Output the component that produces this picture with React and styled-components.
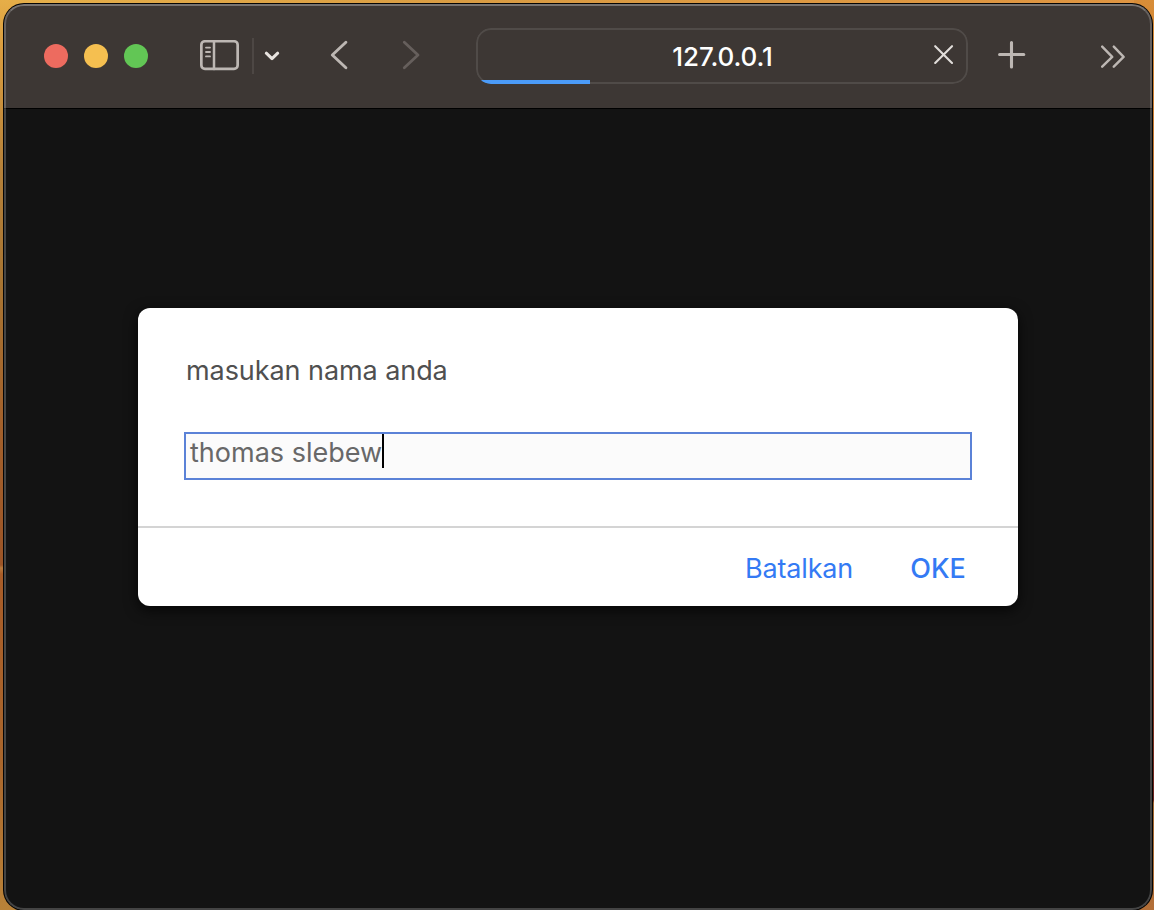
import React from "react";
import styled, { createGlobalStyle } from "styled-components";

const GlobalStyle = createGlobalStyle`
  *, *::before, *::after { box-sizing: border-box; }
  html, body { margin: 0; height: 100%; overflow: hidden; }
  body { font-family: Inter, "Liberation Sans", sans-serif; }
`;

const Desktop = styled.div`
  width: 1154px;
  height: 910px;
  padding: 4px 2px 0 4px;
  overflow: hidden;
  background:
    linear-gradient(to bottom, #e6ae48 0, #d99c3f 50px, #b5813a 170px, #a87532 280px, #a3602b 430px, #9c5527 565px, #b87a3c 568px, #a85c28 574px, #a9662c 760px, #b98238 910px) 0 0 / 20px 100% no-repeat,
    linear-gradient(to bottom, #d88d38 0, #c97b30 120px, #b0652b 350px, #8a3c20 680px, #6a201c 800px, #a0652c 803px, #b36f38 910px) 100% 0 / 20px 100% no-repeat,
    linear-gradient(to right, #e6b04a, #d99c43 40%, #df9441);
`;

const Window = styled.main`
  position: relative;
  display: flex;
  flex-direction: column;
  width: 1148px;
  height: 906px;
  overflow: hidden;
  border-radius: 20px;
  background: #131313;
  box-shadow: 0 0 0 1px #050505;

  &::after {
    content: "";
    position: absolute;
    inset: 0;
    border: 2px solid rgba(255, 255, 255, 0.21);
    border-top-color: rgba(255, 255, 255, 0.3);
    border-radius: 20px;
    pointer-events: none;
  }
`;

const Toolbar = styled.header`
  display: flex;
  align-items: center;
  flex: none;
  height: 105px;
  padding-left: 40px;
  background: #3d3734;
  border-bottom: 1px solid #000;
`;

const TrafficLights = styled.div`
  display: flex;
  gap: 16px;
  margin-right: 52px;
`;

const Light = styled.span`
  width: 24px;
  height: 24px;
  border-radius: 50%;
  background: ${(p) => p.$color};
`;

const IconButton = styled.button`
  display: flex;
  flex: none;
  margin: 0 0 ${(p) => p.$lift || 0}px ${(p) => p.$gap || 0}px;
  padding: 0;
  border: 0;
  background: none;
  color: ${(p) => p.$color || "#bdb7b3"};

  svg {
    display: block;
    fill: none;
    stroke: currentColor;
    stroke-linecap: round;
    stroke-linejoin: round;
  }
`;

const Divider = styled.span`
  width: 2px;
  height: 36px;
  margin: 0 0 0 13px;
  background: #4d4744;
`;

const AddressBar = styled.div`
  position: relative;
  display: grid;
  grid-template-columns: 40px 1fr 40px;
  align-items: center;
  flex: none;
  width: 492px;
  height: 56px;
  margin-left: 56px;
  overflow: hidden;
  border-radius: 15px;

  &::before {
    content: "";
    position: absolute;
    inset: 0;
    border: 2px solid #504b48;
    border-radius: 15px;
  }
`;

const Address = styled.span`
  grid-column: 2;
  padding: 2px 0 0 1px;
  text-align: center;
  font-size: 26px;
  line-height: 32px;
  font-weight: 500;
  letter-spacing: -0.1px;
  color: #fff;
`;

const Progress = styled.span`
  position: absolute;
  left: 0;
  bottom: 0;
  width: 114px;
  height: 4px;
  background: #4b9bf8;
`;

const Page = styled.section`
  display: flex;
  flex: 1;
  justify-content: center;
  align-items: flex-start;
  padding-top: 199px;
`;

const Dialog = styled.form`
  display: flex;
  flex-direction: column;
  width: 880px;
  height: 298px;
  border-radius: 12px;
  background: #fff;
  box-shadow: 0 4px 14px rgba(0, 0, 0, 0.75);
`;

const DialogBody = styled.div`
  flex: 1;
  padding: 45px 46px 0;
`;

const Message = styled.p`
  margin: 0 0 43px 2px;
  font-size: 27px;
  line-height: 36px;
  font-weight: 400;
  letter-spacing: -0.07px;
  color: #505050;
`;

const Field = styled.div`
  display: flex;
  align-items: flex-start;
  height: 48px;
  padding-left: 4px;
  border: 2px solid #5b82d7;
  background: #fbfbfb;
  font-size: 27px;
  line-height: 37px;
  font-weight: 400;
  color: #686868;
`;

const Caret = styled.span`
  width: 2px;
  height: 34px;
  background: #000;
`;

const Actions = styled.footer`
  display: flex;
  justify-content: flex-end;
  align-items: center;
  gap: 57px;
  height: 80px;
  padding: 4px 52px 0 0;
  border-top: 2px solid #d4d4d4;
`;

const Action = styled.button`
  margin: 0;
  padding: 0;
  border: 0;
  background: none;
  font-family: inherit;
  font-size: 27px;
  line-height: 36px;
  font-weight: ${(p) => (p.$strong ? 500 : 400)};
  letter-spacing: ${(p) => (p.$strong ? 0.1 : -0.15)}px;
  color: #347af4;
`;

export default function App() {
  return (
    <>
      <GlobalStyle />
      <Desktop>
        <Window>
          <Toolbar>
            <TrafficLights>
              <Light $color="#ed6b5f" />
              <Light $color="#f5bf50" />
              <Light $color="#62c655" />
            </TrafficLights>
            <IconButton type="button" aria-label="Sidebar" $lift={1}>
              <svg width="39" height="31" viewBox="0 0 39 31" strokeWidth="2.7">
                <rect x="1.35" y="1.25" width="36.3" height="27.7" rx="3.6" />
                <path d="M14 1.5v27.4" strokeWidth="2.5" />
                <path d="M6 7.6h4M6 12h4M6 16.4h4" strokeWidth="1.9" />
              </svg>
            </IconButton>
            <Divider />
            <IconButton type="button" aria-label="Tab groups" $gap={10} $color="#e8e3df">
              <svg width="16" height="10" viewBox="0 0 16 10" strokeWidth="3">
                <path d="M2.3 2.2 8 7.6l5.7-5.4" />
              </svg>
            </IconButton>
            <IconButton type="button" aria-label="Back" $gap={50} $lift={2}>
              <svg width="18" height="30" viewBox="0 0 18 30" strokeWidth="2.9">
                <path d="M15.9 2.3 2.3 15l13.6 12.7" />
              </svg>
            </IconButton>
            <IconButton type="button" aria-label="Forward" $gap={54} $lift={2} $color="#665f5c">
              <svg width="18" height="30" viewBox="0 0 18 30" strokeWidth="2.8">
                <path d="M2.3 2.3 16 15 2.3 27.7" />
              </svg>
            </IconButton>
            <AddressBar>
              <Address>127.0.0.1</Address>
              <IconButton type="button" aria-label="Stop" $gap={6} $lift={2} $color="#e0dcd9">
                <svg width="20" height="20" viewBox="0 0 20 20" strokeWidth="2.1">
                  <path d="M1.2 1.2 18 18M18 1.2 1.2 18" />
                </svg>
              </IconButton>
              <Progress />
            </AddressBar>
            <IconButton type="button" aria-label="New tab" $gap={30} $lift={2}>
              <svg width="28" height="28" viewBox="0 0 28 28" strokeWidth="3.1">
                <path d="M13.5 1.6v24.3M1.6 13.5h24.2" />
              </svg>
            </IconButton>
            <IconButton type="button" aria-label="More" $gap={74}>
              <svg width="26" height="24" viewBox="0 0 26 24" strokeWidth="2.4">
                <path d="M2.2 2.6 12.2 12.9l-10 9.8M13.8 2.6 23.6 12.9l-9.8 9.8" />
              </svg>
            </IconButton>
          </Toolbar>
          <Page>
            <Dialog>
              <DialogBody>
                <Message>masukan nama anda</Message>
                <Field>
                  <span>thomas slebew</span>
                  <Caret />
                </Field>
              </DialogBody>
              <Actions>
                <Action type="button">Batalkan</Action>
                <Action type="button" $strong>OKE</Action>
              </Actions>
            </Dialog>
          </Page>
        </Window>
      </Desktop>
    </>
  );
}
